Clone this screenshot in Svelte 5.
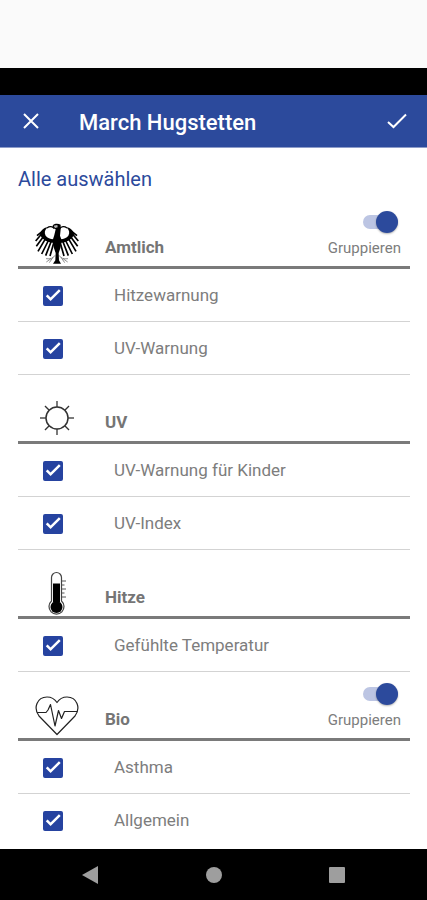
<script lang="ts">
  interface Item {
    label: string;
    checked: boolean;
  }

  interface Section {
    id: string;
    title: string;
    groupable: boolean;
    grouped: boolean;
    items: Item[];
  }

  let sections: Section[] = [
    {
      id: 'amtlich',
      title: 'Amtlich',
      groupable: true,
      grouped: true,
      items: [
        { label: 'Hitzewarnung', checked: true },
        { label: 'UV-Warnung', checked: true },
      ],
    },
    {
      id: 'uv',
      title: 'UV',
      groupable: false,
      grouped: false,
      items: [
        { label: 'UV-Warnung für Kinder', checked: true },
        { label: 'UV-Index', checked: true },
      ],
    },
    {
      id: 'hitze',
      title: 'Hitze',
      groupable: false,
      grouped: false,
      items: [{ label: 'Gefühlte Temperatur', checked: true }],
    },
    {
      id: 'bio',
      title: 'Bio',
      groupable: true,
      grouped: true,
      items: [
        { label: 'Asthma', checked: true },
        { label: 'Allgemein', checked: true },
      ],
    },
  ];

  const rays = [0, 45, 90, 135, 180, 225, 270, 315];

  function selectAll() {
    sections = sections.map((s) => ({
      ...s,
      items: s.items.map((i) => ({ ...i, checked: true })),
    }));
  }
</script>

<div class="screen">
  <div class="top-space"></div>
  <div class="status-bar"></div>

  <header>
    <button class="icon-btn" aria-label="Schließen">
      <svg width="24" height="24" viewBox="0 0 24 24">
        <path d="M5 5L19 19M19 5L5 19" fill="none" stroke="#fff" stroke-width="2" />
      </svg>
    </button>
    <h1>March Hugstetten</h1>
    <button class="icon-btn" aria-label="Speichern">
      <svg width="24" height="24" viewBox="0 0 24 24">
        <path d="M3 13L8.5 18L21 5.5" fill="none" stroke="#fff" stroke-width="2" />
      </svg>
    </button>
  </header>

  <main>
    <button class="select-all" on:click={selectAll}>Alle auswählen</button>

    {#each sections as section (section.id)}
      <section>
        <div class="section-head">
          <span class="section-icon">
            {#if section.id === 'amtlich'}
              <svg width="44" height="42" viewBox="0 0 132 126">
                <defs>
                  <g id="wing">
                    <path d="M60 48C50 50 38 46 32 38C27 30 29 20 38 13C27 13 18 22 15 33C18 48 38 60 60 60Z" />
                    <g fill="none" stroke="#000" stroke-width="5">
                      <path d="M22 25L6 38M19 34L2 54M25 41L4 70M32 46L9 85M41 51L20 93M49 54L32 98M57 57L45 99" />
                    </g>
                    <path d="M36 15C44 9 53 10 58 17" fill="none" stroke="#000" stroke-width="4" />
                    <g fill="none" stroke="#777" stroke-width="2.5">
                      <path d="M60 97C54 106 46 109 33 107M54 103L43 119M48 107L34 117" />
                    </g>
                  </g>
                </defs>
                <use href="#wing" />
                <use href="#wing" transform="matrix(-1 0 0 1 132 0)" />
                <path d="M54 6C60 1 70 1 77 5L77 19L75 38L80 52L76 76L71 90L72 112L78 122H54L61 112L62 90L57 76L53 52L58 36L62 19L52 13Z" />
                <path d="M56 8L67 6L68 13L60 15Z" fill="#bbb" />
              </svg>
            {:else if section.id === 'uv'}
              <svg width="44" height="44" viewBox="0 0 44 44" fill="none" stroke="#333">
                <circle cx="22" cy="22" r="11" stroke-width="1.5" />
                {#each rays as angle}
                  <path d="M22 11V5" stroke-width="1.3" transform="rotate({angle} 22 22)" />
                {/each}
              </svg>
            {:else if section.id === 'hitze'}
              <svg width="44" height="44" viewBox="0 0 44 44">
                <path d="M16.500 30V6.500a5 5 0 0 1 10 0V30a7.500 7.500 0 1 1-10 0Z" fill="#fff" stroke="#444" stroke-width="1.2" />
                <path d="M18 12.500H25V31H18Z" />
                <circle cx="21.500" cy="36" r="6" />
                <path d="M27 10H31M27 14H29.500M27 18H31M27 22H29.500M27 26H31" fill="none" stroke="#555" stroke-width="1" />
              </svg>
            {:else}
              <svg width="44" height="42" viewBox="0 0 44 42" fill="none" stroke="#222" stroke-width="1.2" stroke-linejoin="round">
                <path d="M22 39.500L4 21C-2 13 2 2 12 2C17 2 20 4.500 22 7.500C24 4.500 27 2 32 2C42 2 46 13 40 21Z" />
                <path d="M2 17.500H11L13 15L15.500 9.500L20 31L23.500 15.500L26.500 23.500L29.500 16.500H42" />
              </svg>
            {/if}
          </span>
          <h2>{section.title}</h2>
          {#if section.groupable}
            <label class="group-toggle">
              <input type="checkbox" role="switch" class="switch" bind:checked={section.grouped} />
              <span>Gruppieren</span>
            </label>
          {/if}
        </div>

        <ul>
          {#each section.items as item (item.label)}
            <li>
              <label class="row">
                <input type="checkbox" class="box" bind:checked={item.checked} />
                <span>{item.label}</span>
              </label>
            </li>
          {/each}
        </ul>
      </section>
    {/each}
  </main>

  <nav>
    <button aria-label="Zurück">
      <svg width="18" height="18" viewBox="0 0 18 18"><path d="M1 9L17 0V18Z" fill="#9e9e9e" /></svg>
    </button>
    <button aria-label="Startbildschirm">
      <svg width="18" height="18" viewBox="0 0 18 18"><circle cx="9" cy="9" r="8" fill="#9e9e9e" /></svg>
    </button>
    <button aria-label="Übersicht">
      <svg width="18" height="18" viewBox="0 0 18 18"><rect x="1" y="1" width="16" height="16" rx="1" fill="#9e9e9e" /></svg>
    </button>
  </nav>
</div>

<style>
  :global(body) {
    margin: 0;
    font-family: Roboto, 'Liberation Sans', sans-serif;
    background: #fff;
  }

  button {
    border: none;
    background: none;
    padding: 0;
    font: inherit;
    cursor: pointer;
  }

  svg {
    display: block;
  }

  .screen {
    display: flex;
    flex-direction: column;
    min-height: 100vh;
  }

  .top-space {
    height: 68px;
    background: #fafafa;
  }

  .status-bar {
    height: 27px;
    background: #000;
  }

  header {
    display: flex;
    align-items: center;
    height: 52px;
    padding: 0 18px 0 19px;
    background: #2c4a9c;
    border-bottom: 1px solid #8d9cc9;
  }

  header h1 {
    flex: 1;
    margin: 2px 0 0 36px;
    font-size: 22px;
    font-weight: 500;
    color: #fff;
  }

  main {
    flex: 1;
    padding: 0 17px 0 18px;
  }

  .select-all {
    display: block;
    height: 52px;
    line-height: 62px;
    font-size: 20px;
    color: #2c4a9c;
  }

  .section-head {
    display: flex;
    align-items: flex-end;
    height: 66px;
    padding: 0 9px 0 17px;
    border-bottom: 3px solid #7a7a7a;
  }

  .section-icon {
    width: 44px;
    margin-bottom: 1px;
  }

  h2 {
    flex: 1;
    margin: 0 0 7px 26px;
    font-size: 17px;
    line-height: 24px;
    font-weight: 700;
    color: #757575;
  }

  .group-toggle {
    display: flex;
    flex-direction: column;
    align-items: flex-end;
    gap: 5px;
    margin-bottom: 8px;
    font-size: 15px;
    line-height: 20px;
    color: #7d7d7d;
  }

  .switch {
    appearance: none;
    display: flex;
    align-items: center;
    width: 35px;
    height: 14px;
    margin: 0 3px 4px 0;
    border-radius: 7px;
    background: #ccc;
    cursor: pointer;
  }

  .switch::before {
    content: '';
    flex: none;
    width: 22px;
    height: 22px;
    border-radius: 50%;
    background: #f5f5f5;
    box-shadow: 0 1px 2px rgba(0, 0, 0, 0.3);
  }

  .switch:checked {
    justify-content: flex-end;
    background: #bcc5e3;
  }

  .switch:checked::before {
    background: #2c4a9c;
  }

  ul {
    list-style: none;
    margin: 0;
    padding: 0;
  }

  li {
    border-bottom: 1px solid #d3d3d3;
  }

  section:last-child li:last-child {
    border-bottom: none;
  }

  .row {
    display: flex;
    align-items: center;
    gap: 51px;
    height: 52px;
    padding: 1px 0 0 25px;
    box-sizing: border-box;
    font-size: 17px;
    line-height: 21px;
    color: #7d7d7d;
  }

  .box {
    appearance: none;
    width: 20px;
    height: 20px;
    margin: 0;
    border: 2px solid #2643a0;
    border-radius: 2px;
    cursor: pointer;
  }

  .box:checked {
    background: #2643a0;
  }

  .box:checked::before {
    content: '';
    display: block;
    width: 16px;
    height: 16px;
    background: #fff;
    clip-path: polygon(5% 54%, 35% 84%, 98% 22%, 87% 11%, 35% 63%, 16% 43%);
  }

  nav {
    display: flex;
    align-items: center;
    justify-content: space-between;
    height: 51px;
    padding: 0 81px;
    background: #000;
  }
</style>
